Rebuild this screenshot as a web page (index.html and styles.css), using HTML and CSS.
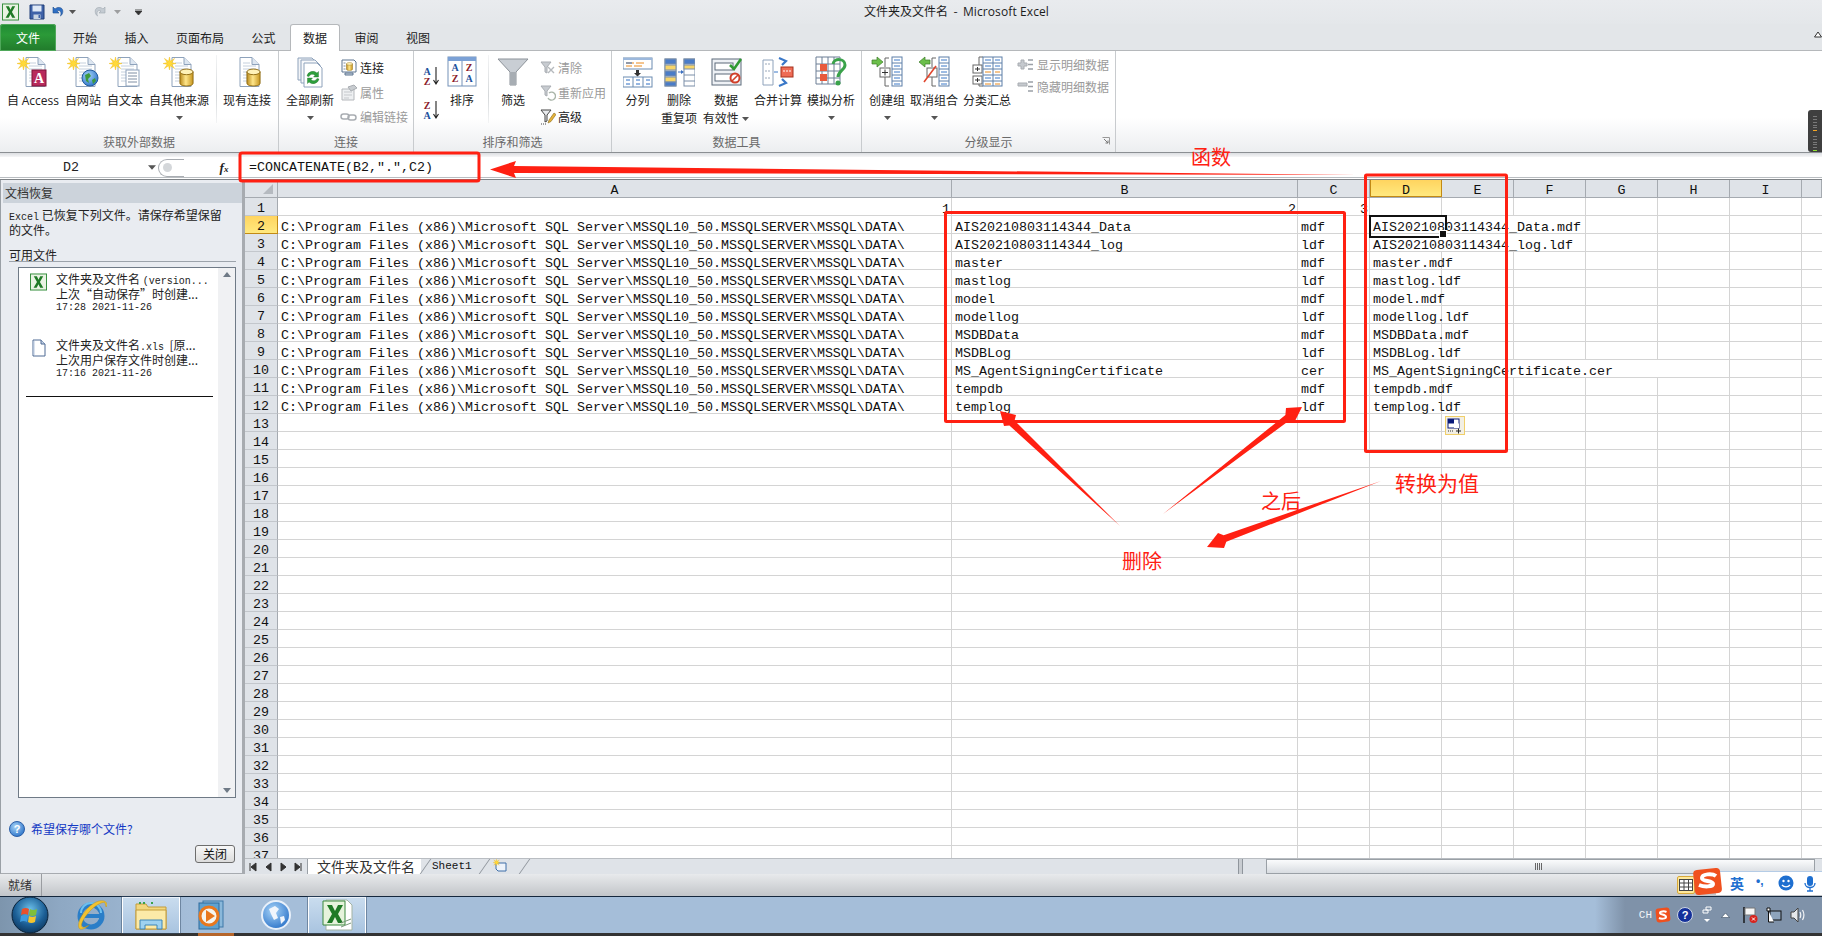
FILE: index.html
```html
<!DOCTYPE html>
<html lang="zh-CN">
<head>
<meta charset="utf-8">
<title>文件夹及文件名 - Microsoft Excel</title>
<link rel="stylesheet" href="styles.css">
</head>
<body>
<svg class="defs" width="0" height="0">
  <defs>
    <linearGradient id="gold" x1="0" y1="0" x2="1" y2="0"><stop offset="0" stop-color="#b98a1c"/><stop offset=".45" stop-color="#ffe68a"/><stop offset="1" stop-color="#c6951e"/></linearGradient>
    <radialGradient id="orb" cx=".5" cy=".35" r=".7"><stop offset="0" stop-color="#6cc0ea"/><stop offset=".6" stop-color="#1c5f96"/><stop offset="1" stop-color="#0c3155"/></radialGradient>
    <radialGradient id="glb" cx=".4" cy=".35" r=".7"><stop offset="0" stop-color="#a8d4f8"/><stop offset="1" stop-color="#2a72c8"/></radialGradient>
    <symbol id="page" viewBox="0 0 32 32"><path d="M9 1.5h12l7 7v22H9z" fill="#fff" stroke="#8ea2bb"/><path d="M21 1.5v7h7" fill="#dde6f1" stroke="#8ea2bb"/><path d="M12 7h7M12 10h13M12 13h13M12 16h13M12 19h13M12 22h13M12 25h13" stroke="#c5d0dd"/></symbol>
    <symbol id="star" viewBox="0 0 14 14"><path d="M7 0l1 4.500L12.500 1.500 9.500 6 14 7 9.500 8l3 4.500L8 9.500 7 14 6 9.500 1.500 12.500l3-4.500L0 7l4.500-1-3-4.500L6 4.500z" fill="#ffd93a" stroke="#f0b400" stroke-width=".4"/></symbol>
    <symbol id="db" viewBox="0 0 16 20"><path d="M1 4v12c0 2 3 3 7 3s7-1 7-3V4z" fill="url(#gold)" stroke="#8e6a12"/><ellipse cx="8" cy="4" rx="7" ry="3" fill="#fff2b8" stroke="#8e6a12"/></symbol>
    <symbol id="caret" viewBox="0 0 7 4"><path d="M0 0h7L3.500 4z" fill="#555"/></symbol>
    <symbol id="xl" viewBox="0 0 18 18"><rect x=".5" y=".5" width="17" height="17" fill="#e9f3e3" stroke="#2e8b37"/><path d="M4 3h3.300L9 6.500 10.800 3H14l-3.500 6 3.600 6h-3.300L9 11.300 7 15H3.800l3.600-6z" fill="#1f7a26"/></symbol>
  </defs>
</svg>

<div class="app">
  <header class="titlebar">
    <div class="qat">
      <svg class="q-xl" width="17" height="18"><use href="#xl"/></svg>
      <i class="q-sep"></i>
      <svg class="q-ic" width="16" height="16" viewBox="0 0 16 16"><path d="M1 1h14v14H1z" fill="#3f62a8" stroke="#1f3c77"/><path d="M3.500 1.500h9v6h-9z" fill="#dfe9f6"/><path d="M4.500 10.500h7v4.500h-7z" fill="#c9d4e2"/><path d="M9.500 11h1.500v3H9.500z" fill="#3f62a8"/></svg>
      <svg class="q-ic" width="14" height="16" viewBox="0 0 14 16"><path d="M3 3v6h6L7 7c3-1.500 5 1 3.500 5 3-2 3.500-8-1-8.500C7.500 3.300 6 4 5 5z" fill="#2f6fc4" stroke="#1c4d91" stroke-width=".6"/></svg>
      <svg class="q-car" width="7" height="4"><use href="#caret"/></svg>
      <svg class="q-ic q-redo" width="14" height="16" viewBox="0 0 14 16"><path d="M11 3v6H5l2-2C4 5.500 2 8 3.500 12c-3-2-3.500-8 1-8.500C6.500 3.300 8 4 9 5z" fill="#c4cbd2" stroke="#a0a8b0" stroke-width=".6"/></svg>
      <svg class="q-car q-dim" width="7" height="4"><use href="#caret"/></svg>
      <i class="q-sep"></i>
      <svg class="q-cust" width="7" height="6" viewBox="0 0 7 6"><path d="M0 0h7M0 2h7l-3.500 4z" stroke="#333" fill="#333" stroke-width=".8"/></svg>
    </div>
    <div class="title">文件夹及文件名&nbsp; - &nbsp;<span class="title-en">Microsoft Excel</span></div>
  </header>

  <nav class="tabs">
    <div class="file-tab">文件</div>
    <div class="tab">开始</div>
    <div class="tab">插入</div>
    <div class="tab">页面布局</div>
    <div class="tab">公式</div>
    <div class="tab active">数据</div>
    <div class="tab">审阅</div>
    <div class="tab">视图</div>
    <svg class="ribbon-min" width="8" height="7" viewBox="0 0 8 7"><path d="M.5 6L4 1l3.500 5z" fill="#fff" stroke="#333"/></svg>
  </nav>

  <section class="ribbon">
    <div class="group g1">
      <div class="g-body">
        <div class="big">
          <svg class="ic" width="34" height="32"><use href="#page"/><use href="#star" width="13" height="13" x="1" y="1"/><rect x="16" y="14" width="14" height="16" fill="#b82a5c" stroke="#7e1438"/><text x="23" y="27" class="svg-a">A</text></svg>
          <div class="lb">自 <span class="en">Access</span></div>
        </div>
        <div class="big">
          <svg class="ic" width="34" height="32"><use href="#page"/><use href="#star" width="13" height="13" x="1" y="1"/><circle cx="24" cy="22" r="8" fill="url(#glb)" stroke="#235a9c"/><path d="M19 19l4-2 2 3-3 3 1 4-3-2zM26 24l3-2 1 3-3 3z" fill="#3d9a3d"/></svg>
          <div class="lb">自网站</div>
        </div>
        <div class="big">
          <svg class="ic" width="34" height="32"><use href="#page"/><use href="#star" width="13" height="13" x="1" y="1"/><rect x="18" y="14" width="13" height="16" fill="#fff" stroke="#8ea2bb"/><path d="M20 17h9M20 20h9M20 23h9M20 26h9" stroke="#7e8ea3"/></svg>
          <div class="lb">自文本</div>
        </div>
        <div class="big wide">
          <svg class="ic" width="34" height="32"><use href="#page"/><use href="#star" width="13" height="13" x="1" y="1"/><use href="#db" x="17" y="12" width="15" height="19"/></svg>
          <div class="lb">自其他来源</div>
          <svg class="dd" width="7" height="4"><use href="#caret"/></svg>
        </div>
        <i class="vsep sep-1"></i>
        <div class="big">
          <svg class="ic" width="34" height="32"><use href="#page"/><use href="#db" x="16" y="12" width="15" height="19"/></svg>
          <div class="lb">现有连接</div>
        </div>
      </div>
      <div class="g-label">获取外部数据</div>
    </div>

    <div class="group g2">
      <div class="g-body">
        <div class="big">
          <svg class="ic" width="34" height="32" viewBox="0 0 34 32"><path d="M5 2h14l5 5v17H5z" fill="#f2f4f7" stroke="#8ea2bb"/><path d="M8 4h14l5 5v18H8z" fill="#f8f9fb" stroke="#8ea2bb"/><path d="M11 7h13l5 5v19H11z" fill="#fff" stroke="#8ea2bb"/><path d="M14 20a6 6 0 0 1 10-3l1.500-1.500V21h-5l1.500-1.500a3.500 3.500 0 0 0-6 1zM26 23a6 6 0 0 1-10 3l-1.500 1.500V22h5L18 23.500a3.500 3.500 0 0 0 6-1z" fill="#2e9f3c" stroke="#1e7029" stroke-width=".4"/></svg>
          <div class="lb">全部刷新</div>
          <svg class="dd" width="7" height="4"><use href="#caret"/></svg>
        </div>
        <div class="small-col c-2">
          <div class="sm"><svg width="18" height="18" viewBox="0 0 18 18"><path d="M2 1h12l2 2v10H2z" fill="#fff" stroke="#5d7590"/><path d="M5 14h8v2H5z" fill="#cdd7e2" stroke="#5d7590"/><use href="#db" x="6" y="3" width="7" height="9"/><path d="M3.500 4h2M3.500 7h2M3.500 10h2" stroke="#7e8ea3"/></svg>连接</div>
          <div class="sm off"><svg width="18" height="18" viewBox="0 0 18 18"><path d="M2 5h12v11H2z" fill="#eef0f2" stroke="#b5b8bc"/><path d="M4 8h8M4 11h8M4 14h5" stroke="#c5c8cc"/><path d="M8 3l6-2 3 3-6 3z" fill="#c8ccd0" stroke="#a9adb2"/></svg>属性</div>
          <div class="sm off"><svg width="18" height="18" viewBox="0 0 18 18"><rect x="1" y="6" width="8" height="5" rx="2.500" fill="none" stroke="#a9adb2" stroke-width="1.500"/><rect x="8" y="7" width="8" height="5" rx="2.500" fill="none" stroke="#a9adb2" stroke-width="1.500"/></svg>编辑链接</div>
        </div>
      </div>
      <div class="g-label">连接</div>
    </div>

    <div class="group g3">
      <div class="g-body">
        <div class="sort-col">
          <svg width="17" height="20" viewBox="0 0 17 20"><text x="4" y="9" class="svg-az az-b">A</text><text x="4" y="19" class="svg-az az-r">Z</text><path d="M13 1v16M10.500 14l2.500 4 2.500-4" fill="none" stroke="#222" stroke-width="1.100"/></svg>
          <svg width="17" height="20" viewBox="0 0 17 20"><text x="4" y="9" class="svg-az az-r">Z</text><text x="4" y="19" class="svg-az az-b">A</text><path d="M13 1v16M10.500 14l2.500 4 2.500-4" fill="none" stroke="#222" stroke-width="1.100"/></svg>
        </div>
        <div class="big w-sort">
          <svg class="ic" width="30" height="32" viewBox="0 0 30 32"><rect x="1" y="1" width="28" height="29" fill="#fff" stroke="#7592b8"/><rect x="1" y="1" width="28" height="4" fill="#7ba1d6"/><path d="M15 5v25" stroke="#7592b8"/><text x="8" y="15" class="svg-az az-b">A</text><text x="8" y="26" class="svg-az az-r">Z</text><text x="22" y="15" class="svg-az az-r">Z</text><text x="22" y="26" class="svg-az az-b">A</text></svg>
          <div class="lb">排序</div>
        </div>
        <i class="vsep sep-3"></i>
        <div class="big w-sort">
          <svg class="ic" width="32" height="32" viewBox="0 0 32 32"><path d="M1 3h30L19 16v13h-6V16z" fill="#c9ced4" stroke="#8b9198"/><path d="M13 16h6v13h-6z" fill="#a7adb3"/></svg>
          <div class="lb">筛选</div>
        </div>
        <div class="small-col c-3">
          <div class="sm off"><svg width="16" height="18" viewBox="0 0 16 18"><path d="M1 3h10L7 8v6l-2-1V8z" fill="#c7cbd0" stroke="#a9adb2"/><path d="M8 8l6 6M14 8l-6 6" stroke="#b5b9bd" stroke-width="1.400"/></svg>清除</div>
          <div class="sm off"><svg width="16" height="18" viewBox="0 0 16 18"><path d="M1 2h10L7 7v5l-2-1V7z" fill="#c7cbd0" stroke="#a9adb2"/><path d="M9 9a4 4 0 1 1-1 5" fill="none" stroke="#a9b5a9" stroke-width="1.400"/></svg>重新应用</div>
          <div class="sm"><svg width="16" height="18" viewBox="0 0 16 18"><path d="M1 2h10L7 7v6l-2 1V7z" fill="#e8eaed" stroke="#444"/><path d="M8 15l1-3 5-7 2 1.500-5 7z" fill="#e5b33b" stroke="#8a6a1a" stroke-width=".6"/><path d="M1 16h6" stroke="#444" stroke-dasharray="1 1"/></svg>高级</div>
        </div>
      </div>
      <div class="g-label">排序和筛选</div>
    </div>

    <div class="group g4">
      <div class="g-body">
        <div class="big w-39">
          <svg class="ic" width="30" height="32" viewBox="0 0 30 32"><rect x="0" y="2" width="29" height="11" fill="#fff" stroke="#6b8bb1"/><rect x="0" y="2" width="29" height="2" fill="#9cb8dc"/><path d="M3 7h8M13 7h8M3 10h6M11 10h8" stroke="#e98a1e"/><path d="M3 7h6" stroke="#2f6fc4"/><path d="M13 14h3v3h2l-3.500 3.500L11 17h2z" fill="#333"/><rect x="0" y="21" width="29" height="10" fill="#fff" stroke="#6b8bb1"/><path d="M10 21v10M20 21v10" stroke="#6b8bb1"/><path d="M3 24h4M13 24h4M23 24h4M3 28h4M13 28h4M23 28h4" stroke="#2f6fc4"/></svg>
          <div class="lb">分列</div>
        </div>
        <div class="big w-44">
          <svg class="ic" width="32" height="32" viewBox="0 0 32 32"><g stroke="#7a8ea8"><rect x="2" y="3" width="11" height="27" fill="#fff"/><rect x="2" y="3" width="11" height="5" fill="#4a7cc8"/><rect x="2" y="9" width="11" height="5" fill="#f7d56a"/><rect x="2" y="15" width="11" height="5" fill="#4a7cc8"/><rect x="2" y="21" width="11" height="5" fill="#f7d56a"/><rect x="2" y="26" width="11" height="4" fill="#4a7cc8"/><rect x="21" y="3" width="11" height="27" fill="#fff"/><rect x="21" y="3" width="11" height="5" fill="#4a7cc8"/><rect x="21" y="9" width="11" height="4" fill="#f7d56a"/><path d="M21 19h11M21 25h11"/></g><path d="M15 16h4" stroke="#3a6fc0"/><path d="M18 14l3 2-3 2z" fill="#3a6fc0"/></svg>
          <div class="lb">删除</div>
          <div class="lb">重复项</div>
        </div>
        <div class="big w-50">
          <svg class="ic" width="32" height="32" viewBox="0 0 32 32"><rect x="2" y="3" width="29" height="26" fill="#eef1f5" stroke="#5d6b7b"/><rect x="5" y="7" width="18" height="7" fill="#fff" stroke="#5d6b7b"/><rect x="5" y="18" width="18" height="7" fill="#fff" stroke="#5d6b7b"/><path d="M20 9l4 4 7-10" fill="none" stroke="#2f9a32" stroke-width="2.600"/><circle cx="25" cy="22" r="4.500" fill="#fff" stroke="#d0402a" stroke-width="2"/><path d="M22 25l6-6" stroke="#d0402a" stroke-width="1.600"/></svg>
          <div class="lb">数据</div>
          <div class="lb">有效性 <svg width="7" height="4"><use href="#caret"/></svg></div>
        </div>
        <div class="big w-54">
          <svg class="ic" width="34" height="32" viewBox="0 0 34 32"><path d="M2 4h10v25H2z" fill="#fff" stroke="#8ea2bb"/><path d="M4 8h6M4 15h6M4 22h6" stroke="#9aa8ba" stroke-dasharray="2 1"/><path d="M18 2l7 3-4 4M18 30l7-3-4-4" fill="none" stroke="#3a78c8" stroke-width="2.200"/><path d="M13 16h4" stroke="#3a78c8"/><rect x="20" y="11" width="12" height="10" fill="#ee6b55" stroke="#a5301d"/><path d="M22 15h8" stroke="#fff" stroke-dasharray="2 1"/></svg>
          <div class="lb">合并计算</div>
        </div>
        <div class="big w-52">
          <svg class="ic" width="32" height="32" viewBox="0 0 32 32"><path d="M1 1h24v27H1zM1 8h24M1 15h24M1 22h24M7 1v27M13 1v27M19 1v27" fill="#fff" stroke="#6d7f95"/><rect x="5" y="8" width="7" height="7" fill="#e8593c"/><rect x="5" y="18" width="7" height="7" fill="#e8593c"/><path d="M18 8c1-6 12-6 12 1 0 5-7 6-7 12" fill="none" stroke="#3aa24a" stroke-width="3"/><circle cx="23" cy="27" r="2.500" fill="#3aa24a"/></svg>
          <div class="lb">模拟分析</div>
          <svg class="dd" width="7" height="4"><use href="#caret"/></svg>
        </div>
      </div>
      <div class="g-label">数据工具</div>
    </div>

    <div class="group g5">
      <div class="g-body">
        <div class="big w-42">
          <svg class="ic" width="32" height="32" viewBox="0 0 32 32"><path d="M1 4h5V1l6 5-6 5V8H1z" fill="#6cbf4b" stroke="#3c7c28" stroke-width=".7"/><path d="M18 2h-4v9M18 30h-4V21" fill="none" stroke="#666"/><rect x="9" y="12" width="10" height="9" fill="#fff" stroke="#666"/><path d="M11 16.500h6M14 13.500v6" stroke="#333"/><rect x="21" y="1" width="10" height="29" fill="#fff" stroke="#5d7fa8"/><path d="M21 7h10M21 13h10M21 19h10M21 25h10" stroke="#5d7fa8"/><path d="M23 4h6M23 10h6M23 16h6M23 22h6M23 28h6" stroke="#3a78c8"/></svg>
          <div class="lb">创建组</div>
          <svg class="dd" width="7" height="4"><use href="#caret"/></svg>
        </div>
        <div class="big w-52">
          <svg class="ic" width="32" height="32" viewBox="0 0 32 32"><path d="M12 4H7V1L1 6l6 5V8h5z" fill="#6cbf4b" stroke="#3c7c28" stroke-width=".7"/><path d="M18 2h-4v9M18 30h-4V21" fill="none" stroke="#666"/><rect x="9" y="12" width="10" height="9" fill="#fff" stroke="#666"/><path d="M6 26L18 10" stroke="#e0442c" stroke-width="1.600"/><rect x="21" y="1" width="10" height="29" fill="#fff" stroke="#5d7fa8"/><path d="M21 7h10M21 13h10M21 19h10M21 25h10" stroke="#5d7fa8"/><path d="M23 4h6M23 10h6M23 16h6M23 22h6M23 28h6" stroke="#3a78c8"/></svg>
          <div class="lb">取消组合</div>
          <svg class="dd" width="7" height="4"><use href="#caret"/></svg>
        </div>
        <div class="big w-54">
          <svg class="ic" width="32" height="32" viewBox="0 0 32 32"><path d="M12 1H8v8M12 30H8V22" fill="none" stroke="#666"/><rect x="2" y="9" width="9" height="8" fill="#fff" stroke="#666"/><rect x="2" y="20" width="9" height="8" fill="#fff" stroke="#666"/><path d="M4 13h5M6.500 11v4M4 24h5M6.500 22v4" stroke="#333"/><rect x="12" y="1" width="19" height="29" fill="#fff" stroke="#5d7fa8"/><path d="M12 7h19M12 13h19M12 19h19M12 25h19M22 1v29" stroke="#5d7fa8"/><path d="M14 4h6M24 4h5M14 10h6M24 10h5" stroke="#3a78c8"/><path d="M14 16h6M24 16h5M14 28h6M24 28h5" stroke="#e98a1e"/><path d="M14 22h6M24 22h5" stroke="#3a78c8"/></svg>
          <div class="lb">分类汇总</div>
        </div>
        <div class="small-col c-5">
          <div class="sm off"><svg width="17" height="15" viewBox="0 0 17 15"><path d="M4 2h3v3h3v3H7v3H4V8H1V5h3z" fill="#c5c9ce" stroke="#a9adb2"/><path d="M11 2h5M11 6.500h5M11 11h5" stroke="#9ba0a6" stroke-width="1.400"/></svg>显示明细数据</div>
          <div class="sm off"><svg width="17" height="15" viewBox="0 0 17 15"><path d="M1 3h9v3H1z" fill="#c5c9ce" stroke="#a9adb2"/><path d="M11 2h5M11 6.500h5M11 11h5" stroke="#9ba0a6" stroke-width="1.400"/></svg>隐藏明细数据</div>
        </div>
      </div>
      <div class="g-label">分级显示</div>
      <svg class="launcher" width="8" height="8" viewBox="0 0 8 8"><path d="M.5.500h7v7" fill="none" stroke="#999"/><path d="M2 2l4 4M6 3.500V6H3.500" fill="none" stroke="#777"/></svg>
    </div>
    <div class="widget"><i></i><i></i><i></i><i></i><i></i><i class="o"></i><b></b><i></i><i></i><i></i><i></i><i></i><i class="g"></i></div>
  </section>

  <div class="formula">
    <div class="namebox">D2</div>
    <svg class="nb-car" width="8" height="5"><use href="#caret"/></svg>
    <div class="fx-pill"><i></i></div>
    <div class="fx">f<sub>x</sub></div>
    <div class="f-input">=CONCATENATE(B2,".",C2)</div>
  </div>

  <main class="work">
    <aside class="pane">
      <div class="pane-head">文档恢复</div>
      <p class="pane-msg"><span class="tiny">Excel</span> 已恢复下列文件。请保存希望保留<br>的文件。</p>
      <div class="pane-sub">可用文件</div>
      <div class="list">
        <div class="list-items">
          <div class="item">
            <svg class="it-ic" width="17" height="18"><use href="#xl"/></svg>
            <div class="it-text">
              <div>文件夹及文件名 <span class="tiny">(version...</span></div>
              <div>上次“自动保存”时创建...</div>
              <div class="time">17:28 2021-11-26</div>
            </div>
          </div>
          <div class="item">
            <svg class="it-ic" width="17" height="18" viewBox="0 0 17 18"><path d="M3 1h8l4 4v12H3z" fill="#fff" stroke="#4e6a94"/><path d="M11 1v4h4" fill="#c6d3e6" stroke="#4e6a94"/><path d="M4 2v14" stroke="#b5c6de"/></svg>
            <div class="it-text">
              <div>文件夹及文件名<span class="tiny">.xls</span> &nbsp;[原...</div>
              <div>上次用户保存文件时创建...</div>
              <div class="time">17:16 2021-11-26</div>
            </div>
          </div>
          <div class="rule"></div>
        </div>
        <div class="vbar"><span class="up"></span><span class="down"></span></div>
      </div>
      <div class="help">
        <svg width="16" height="16" viewBox="0 0 16 16"><circle cx="8" cy="8" r="7.500" fill="url(#glb)" stroke="#2c5fa8"/><text x="8" y="12" class="svg-q">?</text></svg>
        <span>希望保存哪个文件?</span>
      </div>
      <div class="close-row"><div class="close-btn">关闭</div></div>
    </aside>

    <div class="sheet">
      <div class="cols">
        <div class="corner"><span></span></div>
        <div class="h">A</div><div class="h">B</div><div class="h">C</div><div class="h cur">D</div><div class="h">E</div><div class="h">F</div><div class="h">G</div><div class="h">H</div><div class="h">I</div><div class="h"></div>
      </div>
      <div class="rows">
        <div class="row"><div class="rh">1</div><div class="c r">1</div><div class="c r">2</div><div class="c r">3</div></div>
        <div class="row"><div class="rh cur">2</div><div class="c">C:\Program Files (x86)\Microsoft SQL Server\MSSQL10_50.MSSQLSERVER\MSSQL\DATA\</div><div class="c">AIS20210803114344_Data</div><div class="c">mdf</div><div class="c s2 sel">AIS20210803114344_Data.mdf</div></div>
        <div class="row"><div class="rh">3</div><div class="c">C:\Program Files (x86)\Microsoft SQL Server\MSSQL10_50.MSSQLSERVER\MSSQL\DATA\</div><div class="c">AIS20210803114344_log</div><div class="c">ldf</div><div class="c s2">AIS20210803114344_log.ldf</div></div>
        <div class="row"><div class="rh">4</div><div class="c">C:\Program Files (x86)\Microsoft SQL Server\MSSQL10_50.MSSQLSERVER\MSSQL\DATA\</div><div class="c">master</div><div class="c">mdf</div><div class="c">master.mdf</div></div>
        <div class="row"><div class="rh">5</div><div class="c">C:\Program Files (x86)\Microsoft SQL Server\MSSQL10_50.MSSQLSERVER\MSSQL\DATA\</div><div class="c">mastlog</div><div class="c">ldf</div><div class="c">mastlog.ldf</div></div>
        <div class="row"><div class="rh">6</div><div class="c">C:\Program Files (x86)\Microsoft SQL Server\MSSQL10_50.MSSQLSERVER\MSSQL\DATA\</div><div class="c">model</div><div class="c">mdf</div><div class="c">model.mdf</div></div>
        <div class="row"><div class="rh">7</div><div class="c">C:\Program Files (x86)\Microsoft SQL Server\MSSQL10_50.MSSQLSERVER\MSSQL\DATA\</div><div class="c">modellog</div><div class="c">ldf</div><div class="c">modellog.ldf</div></div>
        <div class="row"><div class="rh">8</div><div class="c">C:\Program Files (x86)\Microsoft SQL Server\MSSQL10_50.MSSQLSERVER\MSSQL\DATA\</div><div class="c">MSDBData</div><div class="c">mdf</div><div class="c">MSDBData.mdf</div></div>
        <div class="row"><div class="rh">9</div><div class="c">C:\Program Files (x86)\Microsoft SQL Server\MSSQL10_50.MSSQLSERVER\MSSQL\DATA\</div><div class="c">MSDBLog</div><div class="c">ldf</div><div class="c">MSDBLog.ldf</div></div>
        <div class="row"><div class="rh">10</div><div class="c">C:\Program Files (x86)\Microsoft SQL Server\MSSQL10_50.MSSQLSERVER\MSSQL\DATA\</div><div class="c">MS_AgentSigningCertificate</div><div class="c">cer</div><div class="c s4">MS_AgentSigningCertificate.cer</div></div>
        <div class="row"><div class="rh">11</div><div class="c">C:\Program Files (x86)\Microsoft SQL Server\MSSQL10_50.MSSQLSERVER\MSSQL\DATA\</div><div class="c">tempdb</div><div class="c">mdf</div><div class="c">tempdb.mdf</div></div>
        <div class="row"><div class="rh">12</div><div class="c">C:\Program Files (x86)\Microsoft SQL Server\MSSQL10_50.MSSQLSERVER\MSSQL\DATA\</div><div class="c">templog</div><div class="c">ldf</div><div class="c">templog.ldf</div></div>
        <div class="row"><div class="rh">13</div></div>
        <div class="row"><div class="rh">14</div></div>
        <div class="row"><div class="rh">15</div></div>
        <div class="row"><div class="rh">16</div></div>
        <div class="row"><div class="rh">17</div></div>
        <div class="row"><div class="rh">18</div></div>
        <div class="row"><div class="rh">19</div></div>
        <div class="row"><div class="rh">20</div></div>
        <div class="row"><div class="rh">21</div></div>
        <div class="row"><div class="rh">22</div></div>
        <div class="row"><div class="rh">23</div></div>
        <div class="row"><div class="rh">24</div></div>
        <div class="row"><div class="rh">25</div></div>
        <div class="row"><div class="rh">26</div></div>
        <div class="row"><div class="rh">27</div></div>
        <div class="row"><div class="rh">28</div></div>
        <div class="row"><div class="rh">29</div></div>
        <div class="row"><div class="rh">30</div></div>
        <div class="row"><div class="rh">31</div></div>
        <div class="row"><div class="rh">32</div></div>
        <div class="row"><div class="rh">33</div></div>
        <div class="row"><div class="rh">34</div></div>
        <div class="row"><div class="rh">35</div></div>
        <div class="row"><div class="rh">36</div></div>
        <div class="row"><div class="rh">37</div></div>
      </div>
      <div class="strip">
        <div class="nav">
          <svg width="63" height="12" viewBox="0 0 63 12"><path d="M5 2v8M11 2l-5 4 5 4zM26 2l-5 4 5 4zM36 2l5 4-5 4zM50 2l5 4-5 4zM56 2v8" fill="#333" stroke="#333"/></svg>
        </div>
        <div class="st on">文件夹及文件名</div>
        <div class="st mono">Sheet1</div>
        <div class="st new"><svg width="15" height="14" viewBox="0 0 15 14"><path d="M3 4h10v8H5l-2-2z" fill="#eef3fa" stroke="#3f6fa8"/><use href="#star" width="7" height="7" x="0" y="0"/></svg></div>
        <div class="strip-fill"></div>
        <div class="split"></div>
        <div class="hbar"><span class="grip"></span></div>
      </div>
    </div>
  </main>

  <footer class="status">
    <div class="ready">就绪</div>
    <div class="layout-btn"><svg width="14" height="12" viewBox="0 0 14 12"><rect x=".5" y=".5" width="13" height="11" fill="#fff" stroke="#444"/><path d="M.5 4h13M.5 8h13M5 .5v11M9.500 .5v11" stroke="#444"/></svg></div>
  </footer>

  <div class="taskbar">
    <div class="tb orbcell"><svg width="38" height="38" viewBox="0 0 38 38"><circle cx="19" cy="19" r="18" fill="url(#orb)" stroke="#0a2238"/><path d="M11 13c3-1.500 5-1 7 0l-1 6c-2-1-4-1.500-7 0z" fill="#e8512c"/><path d="M19 13c2 1 4 1.500 7 0l-1 6c-3 1.500-5 1-7 0z" fill="#7fbf3a"/><path d="M10 20c3-1.500 5-1 7 0l-1 6c-2-1-4-1.500-7 0z" fill="#3d9be0"/><path d="M18 20c2 1 4 1.500 7 0l-1 6c-3 1.500-5 1-7 0z" fill="#f4c42e"/></svg></div>
    <div class="tb w62"><svg width="32" height="34" viewBox="0 0 32 34"><circle cx="16" cy="18" r="11" fill="none" stroke="#2a7ec8" stroke-width="5"/><path d="M6 18h20" stroke="#2a7ec8" stroke-width="4"/><path d="M26 15a10 10 0 0 0-20 0" fill="none" stroke="#6dc0f0" stroke-width="2"/><path d="M29 3c-7-2-18 6-24 18-2 5-2 9 0 10 3 1 7-2 9-4-3 2-6 3-7 2-2-2 2-10 9-17 6-6 13-9 14-7l1 4c2-2 1-5-2-6z" fill="#f2c230" stroke="#b58a10" stroke-width=".4"/></svg></div>
    <div class="tb act"><svg width="34" height="32" viewBox="0 0 34 32"><path d="M2 4h10l2 3h18v22H2z" fill="#f2d77e" stroke="#c39c3b"/><path d="M2 10h30v19H2z" fill="#fbeaa8" stroke="#c39c3b"/><path d="M5 3h2M9 3h2M17 3h2" stroke="#3aa24a" stroke-width="2"/><path d="M6 20h22v9h-5v-4H11v4H6z" fill="#9ed2f0" stroke="#3c86b8"/></svg></div>
    <div class="tb w64 media"><svg width="30" height="30" viewBox="0 0 30 30"><rect x="6" y="1" width="20" height="26" fill="#8ab8da" stroke="#3f78a8"/><rect x="2" y="3" width="20" height="26" fill="#5fa2d0" stroke="#2f6a9c"/><circle cx="12" cy="16" r="9" fill="#f5f5f0" stroke="#e8781e" stroke-width="3"/><path d="M9 10l9 6-9 6z" fill="#e8781e"/></svg></div>
    <div class="tb w64"><svg width="30" height="30" viewBox="0 0 30 30"><circle cx="15" cy="15" r="14" fill="url(#glb)" stroke="#e8f0fa" stroke-width="2"/><path d="M8 9l6-3 4 3-3 4 2 5-4 2-3-6zM19 17l4-1 1 4-4 4z" fill="#f0f5fc"/></svg></div>
    <div class="tb act"><svg width="32" height="34" viewBox="0 0 32 34"><path d="M5 1h21l5 5v25H5z" fill="#fff" stroke="#a3b3a3"/><path d="M2 2h22v24H2z" fill="#e6f3dc" stroke="#3a8a3f"/><path d="M6 6h5l3 6 3-6h5l-5 9 5 9h-5l-3-6-3 6H6l5-9z" fill="#1f7a26"/><path d="M20 24l10-4M20 28l10-4" stroke="#7a9a7a"/></svg></div>
    <div class="tray">
      <span class="ch">CH</span>
      <svg class="tr t-s" width="16" height="16" viewBox="0 0 16 16"><rect x="1" y="1" width="14" height="14" rx="3" fill="#f0501e" transform="rotate(-6 8 8)"/><path d="M11.500 5C9 3.800 5 4.300 5 6c0 2 6 1 6 4 0 2-5 2-7 1" fill="none" stroke="#fff" stroke-width="2"/></svg>
      <svg class="tr t-n" width="16" height="16" viewBox="0 0 16 16"><circle cx="8" cy="8" r="7.500" fill="#14309a" stroke="#cdd6e2"/><text x="8" y="12" class="svg-q">?</text></svg>
      <svg class="tr t-n" width="10" height="18" viewBox="0 0 10 18"><path d="M1 4h5v3H1zM4 1h5v3H4z" fill="none" stroke="#fff"/><path d="M2 13h6l-3 3z" fill="#fff"/></svg>
      <svg class="tr t-c" width="9" height="6" viewBox="0 0 9 6"><path d="M.5 5.500L4.500 1l4 4.500z" fill="#fff" stroke="#20344a" stroke-width=".5"/></svg>
      <svg class="tr" width="16" height="18" viewBox="0 0 16 18"><path d="M2 1v16" stroke="#111" stroke-width="1.400"/><path d="M3 2h10v7H3z" fill="#f6f6f6" stroke="#777"/><circle cx="11.500" cy="13" r="4" fill="#d8231d"/><path d="M10 11.500l3 3M13 11.500l-3 3" stroke="#fff"/></svg>
      <svg class="tr" width="16" height="16" viewBox="0 0 16 16"><rect x="4" y="4" width="11" height="9" fill="#8ea4bc" stroke="#111"/><path d="M1 1h3v3H1zM2.500 4v11H8" fill="#fff" stroke="#111"/></svg>
      <svg class="tr t-l" width="16" height="16" viewBox="0 0 16 16"><path d="M1 5h3l4-4v14l-4-4H1z" fill="#e6e9ec" stroke="#444"/><path d="M10 5c1 2 1 4 0 6M12.500 3c1.700 3 1.700 7 0 10" fill="none" stroke="#f2f4f6" stroke-width="1.200"/></svg>
    </div>
  </div>

  <div class="ime">
    <svg class="ime-s" width="32" height="31" viewBox="0 0 32 31"><rect x="2" y="3" width="27" height="25" rx="4" fill="#f0501e" transform="rotate(-6 16 15)"/><path d="M24 10c-4-3-14-2-14 2 0 4 11 2 11 6 0 3-9 3-14 1" fill="none" stroke="#fff" stroke-width="4"/></svg>
    <span class="ime-t">英</span>
    <span class="ime-p">•,</span>
    <svg class="ime-f" width="16" height="16" viewBox="0 0 16 16"><circle cx="8" cy="8" r="7.500" fill="#1e6fd0"/><circle cx="5.500" cy="6" r="1.200" fill="#fff"/><circle cx="10.500" cy="6" r="1.200" fill="#fff"/><path d="M4 10c2 2.500 6 2.500 8 0" fill="none" stroke="#fff" stroke-width="1.300"/></svg>
    <svg class="ime-m" width="14" height="17" viewBox="0 0 14 17"><rect x="4" y="1" width="6" height="10" rx="3" fill="#1e6fd0"/><path d="M2 8c0 6 10 6 10 0M7 13v3M4 16h6" fill="none" stroke="#1e6fd0" stroke-width="1.300"/></svg>
  </div>

  <svg class="paste" width="20" height="19" viewBox="0 0 20 19"><rect x=".5" y=".5" width="19" height="18" fill="#f2efe4" stroke="#f0cf6a"/><rect x="3" y="3" width="11" height="9" fill="#fff" stroke="#0a1a7a"/><rect x="3" y="3" width="6" height="4.500" fill="#0a1a7a"/><rect x="9" y="7.500" width="5" height="4.500" fill="#fff"/><path d="M3 15h6" stroke="#333" stroke-dasharray="1 1"/><path d="M11 15h5M13.500 12.500v5" stroke="#222"/></svg>

  <svg class="marks" width="1822" height="936" viewBox="0 0 1822 936">
    <g fill="none" stroke="#ff2012" stroke-width="3" stroke-linejoin="round">
      <rect x="240" y="153" width="239" height="28" rx="2"/>
      <rect x="945.500" y="212.500" width="399" height="209" rx="1"/>
      <rect x="1365.500" y="175" width="141" height="276.500" rx="1"/>
    </g>
    <g fill="#ff2012">
      <polygon points="1356,175 514,166 516,161 490,169.500 516,178 514,173"/>
      <polygon points="1120,526 1014.600,420.600 1016,415 1000,411 1004,426 1009.400,425.400"/>
      <polygon points="1163,514 1285.400,415 1286,408 1302,407 1294,423 1288.600,421"/>
      <polygon points="1381,481 1223.700,535.200 1218,533 1207,547 1224,548 1226.300,541.800"/>
    </g>
  </svg>
  <span class="note n-fn">函数</span>
  <span class="note n-val">转换为值</span>
  <span class="note n-after">之后</span>
  <span class="note n-del">删除</span>
</div>
</body>
</html>
```

FILE: styles.css
```css
* { box-sizing: border-box; }
html, body { margin: 0; padding: 0; }
body { width: 1822px; height: 936px; overflow: hidden; background: #fff; color: #222; font: 12px/1.2 "Noto Sans CJK SC", "Noto Sans", sans-serif; }
.defs { position: absolute; }
.app { position: relative; width: 1822px; height: 936px; display: flex; flex-direction: column; overflow: hidden; }
svg { display: block; flex: none; }

/* title */
.titlebar { height: 24px; flex: none; display: flex; align-items: center; background: linear-gradient(#e9ebee, #e4e7ea); }
.qat { width: 132px; display: flex; align-items: center; padding-left: 2px; }
.q-xl { margin-right: 3px; }
.q-sep { width: 1px; height: 15px; background: #777; margin: 0 5px 0 2px; }
.q-ic { margin-right: 5px; }
.q-redo { margin-left: 13px; }
.q-car { margin-right: 5px; }
.q-dim { opacity: .5; margin-left: 1px; margin-right: 4px; }
.q-cust { margin-left: 3px; }
.title { margin-left: 732px; font-size: 12px; color: #1c1c1c; white-space: nowrap; }
.title-en { font-family: "Open Sans", sans-serif; letter-spacing: .1px; }

/* tabs */
.tabs { height: 27px; flex: none; display: flex; align-items: flex-start; gap: 1.5px; background: #e3e6e9; border-bottom: 1px solid #b5b8bb; position: relative; }
.file-tab { width: 56px; height: 27px; margin-right: 2.500px; background: linear-gradient(#1f8a34, #2b9a38 40%, #217a2b); color: #fff; text-align: center; line-height: 27px; border-radius: 3px 3px 0 0; box-shadow: inset 0 0 0 1px #4fa85a; }
.tab { height: 27px; padding: 0 13px; line-height: 27px; color: #222; }
.tab.active { background: #fff; border: 1px solid #b5b8bb; border-bottom: 0; border-radius: 3px 3px 0 0; padding: 0 12px; height: 27px; line-height: 26px; }
.ribbon-min { position: absolute; right: 0; top: 7px; }

/* ribbon */
.ribbon { height: 102px; flex: none; display: flex; position: relative; background: linear-gradient(#fff 0, #fff 66%, #eceef0 100%); border-bottom: 1px solid #8b8f93; }
.group { flex: none; display: flex; flex-direction: column; border-right: 1px solid #c8cbce; position: relative; }
.g1 { width: 279px; } .g2 { width: 135px; } .g3 { width: 198px; } .g4 { width: 250px; } .g5 { width: 254px; }
.g-body { flex: 1; display: flex; min-height: 0; }
.g-label { height: 20px; line-height: 20px; text-align: center; color: #6a6a6a; flex: none; }
.g1 .g-body { padding-left: 4px; }
.g2 .g-body { padding-left: 4px; }
.g3 .g-body { padding-left: 4px; }
.g4 .g-body { padding-left: 6px; }
.g5 .g-body { padding-left: 4px; }
.big { display: flex; flex-direction: column; align-items: center; padding: 5px 3px 0; white-space: nowrap; }
.ic { margin-bottom: 3px; }
.lb { height: 18px; line-height: 18px; color: #222; }
.lb svg { display: inline-block; vertical-align: 2px; margin-left: 1px; }
.en { font-family: "Open Sans", sans-serif; }
.dd { margin-top: 7px; }
.vsep { width: 1px; height: 68px; margin-top: 4px; background: linear-gradient(#f3f4f5, #d5d8da 60%, #f3f4f5); flex: none; }
.sep-1 { margin-left: 4px; margin-right: 3px; }
.w-sort { width: 36px; padding: 5px 0 0; }
.w-39 { width: 39px; padding: 5px 0 0; }
.w-44 { width: 44px; padding: 5px 0 0; }
.w-50 { width: 50px; padding: 5px 0 0; }
.w-54 { width: 54px; padding: 5px 0 0; }
.w-52 { width: 52px; padding: 5px 0 0; }
.w-42 { width: 42px; padding: 5px 0 0; }
.small-col { display: flex; flex-direction: column; padding-top: 5px; white-space: nowrap; }
.sm { height: 24.500px; display: flex; align-items: center; gap: 2px; color: #222; }
.sm.off { color: #9a9a9a; }
.c-2 { margin-left: 3px; }
.c-3 { margin-left: 9px; }
.c-5 { margin-left: 3px; padding-top: 3px; }
.c-5 .sm { height: 22px; gap: 3px; }
.sort-col { width: 26px; display: flex; flex-direction: column; align-items: center; gap: 14px; padding-top: 15px; }
.sep-3 { margin-left: 8px; margin-right: 6px; }
.svg-a { font: bold 14px "Liberation Serif", serif; fill: #fff; text-anchor: middle; }
.svg-az { font: bold 10px "Liberation Serif", serif; text-anchor: middle; }
.az-b { fill: #1c4f9c; }
.az-r { fill: #8a1c2c; }
.svg-q { font: bold 11px "Liberation Sans", sans-serif; fill: #fff; text-anchor: middle; }
.launcher { position: absolute; right: 5px; bottom: 7px; }
.widget { position: absolute; right: 0; top: 59px; width: 14px; height: 42px; background: #3f3f3f; border-radius: 3px 0 0 3px; display: flex; flex-direction: column; align-items: center; gap: 1px; padding-top: 6px; }
.widget i { width: 4px; height: 1px; background: #7a7a7a; margin-bottom: 1px; }
.widget b { height: 2px; }
.widget .o { background: #f5a623; }
.widget .g { background: #8fe030; }

/* formula bar */
.formula { height: 27px; flex: none; display: flex; align-items: center; background: linear-gradient(#dcdee1 0, #f6f6f7 4px, #fff 4px, #fff 24px, #b9bdc1 24px, #b9bdc1 25px, #fff 25px); border-bottom: 1px solid #7f8387; position: relative; padding-top: 3px; }
.namebox { width: 142px; text-align: center; font: 13.330px "Liberation Mono", monospace; color: #222; }
.nb-car { margin-left: 6px; }
.fx-pill { width: 26px; height: 18px; margin-left: 2px; border: 1px solid #a9adb2; border-right: 0; border-radius: 9px 0 0 9px; display: flex; align-items: center; padding-left: 4px; }
.fx-pill i { width: 9px; height: 9px; border-radius: 50%; background: #d4d7da; }
.fx { width: 20px; margin-left: 30px; font: italic bold 13px "Liberation Serif", serif; text-align: center; }
.fx sub { font-size: 9px; vertical-align: baseline; }
.f-input { margin-left: 15px; font: 13.330px "Liberation Mono", monospace; color: #111; white-space: nowrap; }

/* work area */
.work { height: 694px; flex: none; display: flex; }
.pane { width: 245px; flex: none; background: #e9ecf1; border-left: 1px solid #9aa0a6; border-right: 3px solid #a7abb0; border-bottom: 1px solid #a7abb0; padding: 3px 0 0 2px; display: flex; flex-direction: column; }
.pane-head { height: 20px; line-height: 20px; width: 239px; background: #ccd3db; padding-left: 2px; color: #333; font-size: 12px; }
.pane-msg { margin: 5px 0 0 6px; width: 232px; line-height: 13px; font-size: 12px; color: #222; height: 30px; white-space: nowrap; }
.tiny { font: 10px "Liberation Mono", monospace; }
.pane-sub { margin: 9px 0 0 6px; width: 227px; height: 15px; line-height: 15px; border-bottom: 1px solid #9ca3ab; color: #222; }
.list { margin: 5px 0 0 15px; width: 218px; height: 531px; background: #fff; border: 1px solid #6f7a86; display: flex; }
.list-items { flex: 1; padding: 4px 0 0 11px; }
.item { display: flex; gap: 9px; height: 66px; }
.it-ic { margin-top: 1px; }
.it-text { line-height: 14px; white-space: nowrap; color: #222; }
.time { font: 10px/14px "Liberation Mono", monospace; }
.rule { width: 187px; height: 1px; background: #111; margin: 0 0 0 -4px; position: relative; top: -8px; }
.vbar { width: 17px; background: #f0f1f3; position: relative; flex: none; }
.vbar .up, .vbar .down { position: absolute; left: 5px; border: 4px solid transparent; }
.vbar .up { top: 4px; border-top: 0; border-bottom: 5px solid #6f7a86; }
.vbar .down { bottom: 4px; border-bottom: 0; border-top: 5px solid #6f7a86; }
.help { margin: 23px 0 0 6px; display: flex; align-items: center; gap: 6px; color: #1339c4; height: 16px; flex: none; }
.close-row { display: flex; justify-content: flex-end; margin-top: 8px; padding-right: 7px; flex: none; }
.close-btn { width: 40px; height: 18px; line-height: 16px; text-align: center; border: 1px solid #6d6d6d; border-radius: 3px; background: linear-gradient(#f8f8f8, #dcdcdc); color: #111; }

/* sheet */
.sheet { width: 1577px; flex: none; display: flex; flex-direction: column; font: 13.330px/1 "Liberation Mono", monospace; color: #111; min-width: 0; }
.cols { height: 18px; flex: none; display: grid; grid-template-columns: 33px 674px 346px repeat(7, 72px) 20px; background: #dfe3e8; border-bottom: 1px solid #a5aab0; }
.corner { border-right: 1px solid #a5aab0; position: relative; }
.corner span { position: absolute; right: 4px; bottom: 3px; border-style: solid; border-width: 0 0 10px 10px; border-color: transparent transparent #b5bac0 transparent; }
.h { border-right: 1px solid #a5aab0; text-align: center; line-height: 22px; height: 17px; }
.h.cur { background: linear-gradient(#ffd45f, #ffe97f); border: 1px solid #c28a15; border-top: 0; }
.rows { height: 660px; flex: none; overflow: hidden; }
.row {
  height: 18px; display: grid; grid-template-columns: 33px 674px 346px repeat(7, 72px) 20px;
  border-bottom: 1px solid #d4d4d4;
  background:
    linear-gradient(#d4d4d4, #d4d4d4) 706px 0 / 1px 100% no-repeat,
    linear-gradient(#d4d4d4, #d4d4d4) 1052px 0 / 1px 100% no-repeat,
    linear-gradient(#d4d4d4, #d4d4d4) 1124px 0 / 1px 100% no-repeat,
    linear-gradient(#d4d4d4, #d4d4d4) 1196px 0 / 1px 100% no-repeat,
    linear-gradient(#d4d4d4, #d4d4d4) 1268px 0 / 1px 100% no-repeat,
    linear-gradient(#d4d4d4, #d4d4d4) 1340px 0 / 1px 100% no-repeat,
    linear-gradient(#d4d4d4, #d4d4d4) 1412px 0 / 1px 100% no-repeat,
    linear-gradient(#d4d4d4, #d4d4d4) 1484px 0 / 1px 100% no-repeat,
    linear-gradient(#d4d4d4, #d4d4d4) 1556px 0 / 1px 100% no-repeat;
}
.rh { background: #dfe3e8; border-right: 1px solid #a5aab0; text-align: center; line-height: 22px; height: 18px; border-bottom: 1px solid #c3c7cc; margin-bottom: -1px; }
.rh.cur { background: linear-gradient(#ffd45f, #ffe97f); border-right: 1px solid #c28a15; border-bottom: 1px solid #c28a15; }
.c { padding: 2px 0 0 3px; white-space: nowrap; line-height: 20px; height: 17px; }
.c.r { text-align: right; padding-right: 2px; padding-left: 0; }
.s2 { grid-column: span 2; background: #fff; }
.s4 { grid-column: span 4; background: #fff; }
.sel { position: relative; }
.sel::before { content: ""; position: absolute; left: -1px; top: -1px; width: 74px; height: 19px; border: 2px solid #111; }
.sel::after { content: ""; position: absolute; left: 69px; top: 14px; width: 6px; height: 6px; background: #111; border: 1px solid #fff; }

.strip { height: 16px; flex: none; display: flex; background: #dfe3e8; border-top: 1px solid #b9bdc2; }
.nav { width: 63px; padding-top: 2px; border-right: 1px solid #9aa0a6; }
.st { height: 15px; line-height: 15px; padding: 0 6px; position: relative; white-space: nowrap; }
.st::after { content: ""; position: absolute; right: -5px; top: 0; bottom: 0; width: 1px; background: #8f959c; transform: skewX(-35deg); }
.st.on { background: #fff; font: 14px/15px "Noto Sans CJK SC", sans-serif; padding: 0 6px 0 9px; width: 113px; color: #333; }
.st.mono { padding-left: 11px; width: 59px; font-size: 11px; }
.st.new { width: 40px; padding: 0 0 0 13px; }
.strip-fill { flex: 1; }
.split { width: 5px; margin-right: 23px; background: #c8ccd1; border-left: 1px solid #8f959c; border-right: 1px solid #8f959c; }
.hbar { width: 549px; height: 15px; margin-right: 7px; background: linear-gradient(#fafbfc, #d8dce1); border: 1px solid #9aa0a6; position: relative; }
.grip { position: absolute; left: 268px; top: 3px; width: 8px; height: 7px; background: repeating-linear-gradient(90deg, #666 0 1px, transparent 1px 2px); }

/* status + taskbar */
.status { height: 23px; flex: none; display: flex; align-items: center; background: linear-gradient(#e8eaec, #c2c5c9); border-bottom: 1px solid #14273c; }
.ready { width: 42px; padding-left: 8px; height: 22px; line-height: 22px; border-right: 1px solid #9a9da1; color: #333; }
.layout-btn { margin-left: 1635px; width: 18px; height: 18px; display: flex; align-items: center; justify-content: center; background: #ffe99b; border: 1px solid #d8a93a; border-radius: 2px; }
.taskbar { height: 39px; flex: none; display: flex; background: linear-gradient(90deg, #7d95ad 0, #8ea8c3 60px, #a5bed9 190px, #a5bed9 1595px, #7f92a9 1625px); border-bottom: 3px solid #333; }
.tb { display: flex; align-items: center; justify-content: center; width: 58px; position: relative; }
.orbcell { width: 60px; }
.w62 { width: 62px; }
.w64 { width: 64px; }
.act { background: linear-gradient(#c9dcee, #a9c4e0); border: 1px solid #fff; border-top: 1px solid #e8f0f8; border-bottom: 0; box-shadow: 0 0 0 .5px #39506a; }
.media::after { content: ""; position: absolute; left: 18px; bottom: -3px; width: 36px; height: 3px; background: #b5652a; }
.tray { margin-left: auto; display: flex; align-items: center; padding-right: 16px; color: #fff; }
.ch { font: 11px "Liberation Mono", monospace; margin-right: 3px; color: #f2f5f8; }
.tray .tr { margin-right: 8px; }
.tray .t-s { margin-right: 6px; }
.tray .t-n { margin-right: 9px; }
.tray .t-c { margin-right: 12px; }
.tray .t-l { margin-right: 0; }

/* overlays */
.ime { position: absolute; left: 1692px; top: 866px; width: 130px; height: 30px; display: flex; align-items: center; }
.ime::before { content: ""; position: absolute; left: 24px; top: 5px; right: 0; bottom: 1px; background: #fff; border-top: 1px solid #b5cce6; }
.ime > * { position: relative; }
.ime-s { margin-right: 6px; }
.ime-t { font-size: 14px; font-weight: 700; color: #1e6fd0; margin-right: 12px; top: 2px; }
.ime-p { font: bold 12px "Liberation Sans", sans-serif; color: #1e6fd0; width: 22px; }
.ime-f { top: 2px; }
.ime-m { margin-left: 9px; top: 2px; }
.paste { position: absolute; left: 1445px; top: 416px; }
.marks { position: absolute; left: 0; top: 0; pointer-events: none; }
.note { position: absolute; color: #ff2012; font-size: 20px; line-height: 20px; white-space: nowrap; }
.n-fn { left: 1191px; top: 147px; }
.n-val { left: 1395px; top: 472px; font-size: 21px; line-height: 21px; }
.n-after { left: 1261px; top: 491px; }
.n-del { left: 1122px; top: 551px; }
```
